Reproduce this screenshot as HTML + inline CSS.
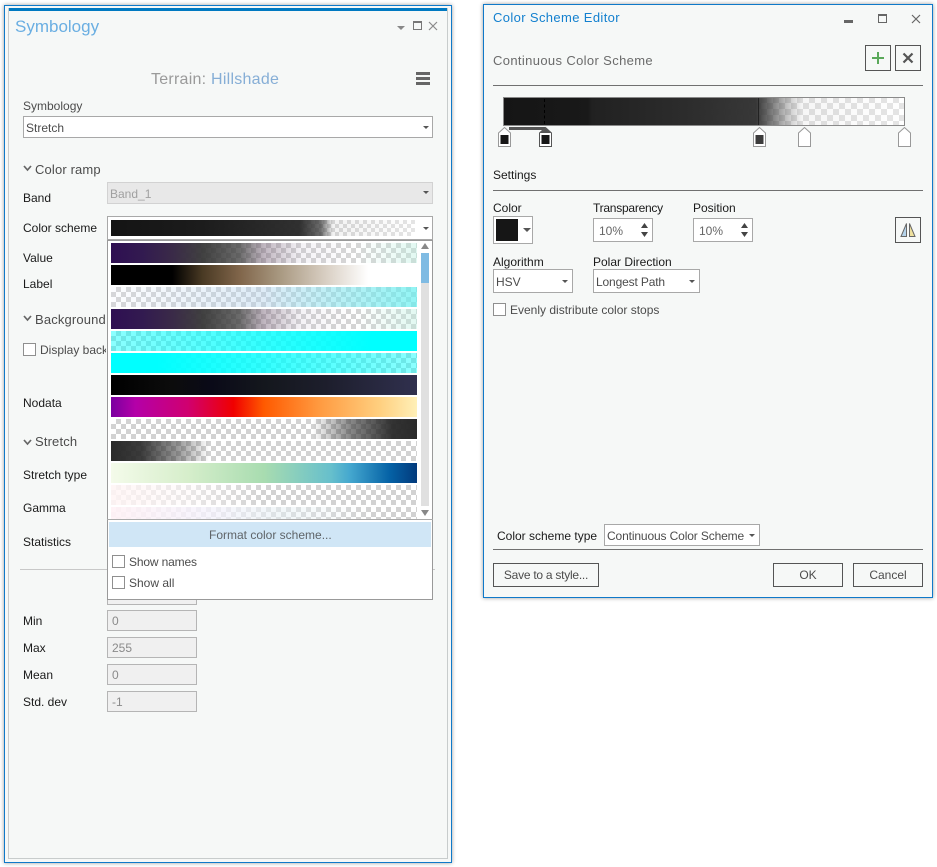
<!DOCTYPE html>
<html><head><meta charset="utf-8"><style>
html,body{margin:0;padding:0;background:#fff}
body{width:937px;height:867px;position:relative;overflow:hidden;font-family:"Liberation Sans",sans-serif;font-size:12px;color:#4c4c4c}
div,span,svg{position:absolute;box-sizing:border-box}
.t{white-space:nowrap;line-height:16px;height:16px}
.k{color:#1a1a1a}
.h{color:#4c4c4c;font-size:13px;letter-spacing:.15px}
.box{border:1px solid #a8a8a8;background:#fff}
.ro{border:1px solid #b5b5b5;background:#f0f0f0;color:#8a8a8a;padding:3px 4px;line-height:14px;font-size:12px;left:107px;width:90px;height:21px}
.ar{width:0;height:0;border-left:3px solid transparent;border-right:3px solid transparent;border-top:3px solid #555}
.cb{width:13px;height:13px;border:1px solid #8f8f8f;background:#fff}
.r{left:111px;width:306px;height:20px}
.chev{width:9px;height:7px}
.btn{border:1px solid #555;background:#f6f8f7;text-align:center;color:#4c4c4c}
.ck{background-color:#fff;background-image:conic-gradient(#d2d2d2 25%,#fff 0 50%,#d2d2d2 0 75%,#fff 0);background-size:10px 10px}
.ck2{background-color:#fff;background-image:conic-gradient(#dcdcdc 25%,#fff 0 50%,#dcdcdc 0 75%,#fff 0);background-size:8px 8px}
</style></head><body>

<!-- LEFT PANEL -->
<div style="left:4px;top:5px;width:448px;height:858px;background:#f6f8f7;border:1px solid #0f79c9;box-shadow:0 0 4px rgba(0,0,0,.4)"></div>
<div style="left:8px;top:8px;width:440px;height:851px;border:1px solid #c8cccc;border-top:none"></div>
<div style="left:9px;top:8px;width:438px;height:3px;background:#0079c1"></div>

<div class="t" style="left:15px;top:17px;font-size:17px;line-height:20px;height:20px;color:#6aaee2">Symbology</div>
<div class="ar" style="left:397px;top:26px;border-left-width:4px;border-right-width:4px;border-top-width:4px;border-top-color:#888"></div>
<div style="left:413px;top:21px;width:9px;height:9px;border:1px solid #777;border-top-width:2px"></div>
<svg style="left:428px;top:21px" width="10" height="10"><path d="M1 1L9 9M9 1L1 9" stroke="#8a8a8a" stroke-width="1.2"/></svg>

<div class="t" style="left:151px;top:70px;font-size:16px;letter-spacing:.25px;line-height:20px;height:20px;color:#9a9a9a">Terrain: <span style="position:static;color:#86aed6">Hillshade</span></div>
<div style="left:416px;top:72px;width:14px;height:3px;background:#666"></div>
<div style="left:416px;top:77px;width:14px;height:3px;background:#666"></div>
<div style="left:416px;top:82px;width:14px;height:3px;background:#666"></div>

<div class="t" style="left:23px;top:98px">Symbology</div>
<div class="box" style="left:23px;top:116px;width:410px;height:22px"></div>
<div class="t" style="left:26px;top:120px">Stretch</div>
<div class="ar" style="left:423px;top:126px"></div>

<svg class="chev" style="left:23px;top:165px" width="9" height="7"><path d="M1 1L4.500 5 8 1" fill="none" stroke="#666" stroke-width="1.700"/></svg>
<div class="t h" style="left:35px;top:162px">Color ramp</div>

<div class="t k" style="left:23px;top:190px">Band</div>
<div style="left:107px;top:182px;width:326px;height:22px;background:#e8e8e8;border:1px solid #d2d2d2"></div>
<div class="t" style="left:110px;top:186px;color:#a0a0a0">Band_1</div>
<div class="ar" style="left:423px;top:191px"></div>

<div class="t k" style="left:23px;top:220px">Color scheme</div>
<div class="box" style="left:107px;top:216px;width:326px;height:24px"></div>
<div class="ck2" style="left:111px;top:220px;width:304px;height:16px"></div>
<div style="left:111px;top:220px;width:304px;height:16px;background:linear-gradient(90deg,#141414 0,#1c1c1c 30%,rgba(42,42,42,.97) 62%,rgba(60,60,60,.75) 69%,rgba(150,150,150,.12) 73%,rgba(255,255,255,.25) 100%)"></div>
<div class="ar" style="left:423px;top:227px"></div>

<div class="t k" style="left:23px;top:250px">Value</div>
<div class="t k" style="left:23px;top:276px">Label</div>

<svg class="chev" style="left:23px;top:315px" width="9" height="7"><path d="M1 1L4.500 5 8 1" fill="none" stroke="#666" stroke-width="1.700"/></svg>
<div class="t h" style="left:35px;top:312px">Background</div>
<div class="cb" style="left:23px;top:343px"></div>
<div class="t" style="left:40px;top:342px;width:66px;overflow:hidden">Display background</div>

<div class="t k" style="left:23px;top:395px">Nodata</div>

<svg class="chev" style="left:23px;top:439px" width="9" height="7"><path d="M1 1L4.500 5 8 1" fill="none" stroke="#666" stroke-width="1.700"/></svg>
<div class="t h" style="left:35px;top:434px">Stretch</div>

<div class="t k" style="left:23px;top:467px">Stretch type</div>
<div class="t k" style="left:23px;top:500px">Gamma</div>
<div class="t k" style="left:23px;top:534px">Statistics</div>
<div style="left:20px;top:569px;width:415px;height:1px;background:#c8c8c8"></div>

<div style="left:107px;top:590px;width:90px;height:15px;border:1px solid #b5b5b5;background:#f0f0f0"></div>
<div class="t k" style="left:23px;top:613px">Min</div>
<div class="ro" style="top:610px">0</div>
<div class="t k" style="left:23px;top:640px">Max</div>
<div class="ro" style="top:637px">255</div>
<div class="t k" style="left:23px;top:667px">Mean</div>
<div class="ro" style="top:664px">0</div>
<div class="t k" style="left:23px;top:694px">Std. dev</div>
<div class="ro" style="top:691px">-1</div>

<!-- DROPDOWN -->
<div style="left:107px;top:240px;width:326px;height:360px;background:#fff;border:1px solid #999"></div>
<div style="left:107px;top:519px;width:326px;height:1px;background:#aaa"></div>

<div class="r ck" style="top:243px"></div>
<div class="r" style="top:243px;background:linear-gradient(90deg,#2f0f52 0,#321a50 10%,#3a2a48 20%,rgba(55,55,55,.95) 30%,rgba(70,70,70,.8) 42%,rgba(130,110,130,.5) 50%,rgba(200,190,210,.2) 62%,rgba(255,255,255,.1) 80%,rgba(190,240,225,.45) 100%)"></div>
<div class="r" style="top:265px;background:linear-gradient(90deg,#000 0,#000 20%,#4a3a24 30%,#80654a 42%,#a89880 55%,#d8cec2 70%,#fff 84%,#fff 100%)"></div>
<div class="r ck" style="top:287px"></div>
<div class="r" style="top:287px;background:linear-gradient(90deg,rgba(240,240,255,.15) 0,rgba(180,210,235,.45) 50%,rgba(100,240,240,.7) 100%)"></div>
<div class="r ck" style="top:309px"></div>
<div class="r" style="top:309px;background:linear-gradient(90deg,#2f0f52 0,#321a50 10%,#3a2a48 20%,rgba(55,55,55,.95) 30%,rgba(70,70,70,.8) 42%,rgba(130,110,130,.5) 50%,rgba(200,190,210,.2) 62%,rgba(255,255,255,.05) 80%,rgba(190,240,225,.45) 100%)"></div>
<div class="r ck" style="top:331px"></div>
<div class="r" style="top:331px;background:linear-gradient(90deg,rgba(0,255,255,.45) 0,rgba(0,255,255,.8) 50%,#0ff 85%)"></div>
<div class="r ck" style="top:353px"></div>
<div class="r" style="top:353px;background:linear-gradient(90deg,#0ff 15%,rgba(0,255,255,.8) 50%,rgba(0,255,255,.45) 100%)"></div>
<div class="r" style="top:375px;background:linear-gradient(90deg,#000 0,#0c0c0c 20%,#0a0a18 33%,#14171d 50%,#1d1e2c 70%,#30304e 100%)"></div>
<div class="r" style="top:397px;background:linear-gradient(90deg,#7a00a0 0,#b400a8 8%,#d00070 25%,#f00000 40%,#ff5a00 50%,#ff9a40 68%,#ffd080 88%,#fff0b8 100%)"></div>
<div class="r ck" style="top:419px"></div>
<div class="r" style="top:419px;background:linear-gradient(90deg,rgba(40,40,40,0) 66%,rgba(60,60,60,.6) 78%,rgba(40,40,40,.95) 92%,#2a2a2a 100%)"></div>
<div class="r ck" style="top:441px"></div>
<div class="r" style="top:441px;background:linear-gradient(90deg,#2a2a2a 0,rgba(40,40,40,.9) 10%,rgba(70,70,70,.55) 22%,rgba(100,100,100,0) 32%)"></div>
<div class="r" style="top:463px;background:linear-gradient(90deg,#f4fbea 0,#d6eecb 25%,#a8dcb0 50%,#66bfcc 72%,#45a8cf 78%,#0562a6 91%,#023a7c 100%)"></div>
<div class="r ck" style="top:485px"></div>
<div class="r" style="top:485px;background:linear-gradient(90deg,rgba(255,245,245,.9) 0,rgba(255,250,250,.55) 25%,rgba(255,255,255,0) 50%)"></div>
<div class="r ck" style="top:507px;height:12px"></div>
<div class="r" style="top:507px;height:12px;background:linear-gradient(90deg,rgba(255,242,246,.95) 0,rgba(245,242,252,.8) 30%,rgba(230,240,244,.55) 55%,rgba(255,255,255,0) 85%)"></div>

<div style="left:421px;top:253px;width:8px;height:253px;background:#e0e0e0"></div>
<div style="left:421px;top:253px;width:8px;height:30px;background:#7fbbe3"></div>
<svg style="left:421px;top:243px" width="8" height="6"><path d="M0 6L4 0 8 6Z" fill="#888"/></svg>
<svg style="left:421px;top:510px" width="8" height="6"><path d="M0 0H8L4 6Z" fill="#888"/></svg>

<div style="left:109px;top:522px;width:322px;height:25px;background:#d0e6f6"></div>
<div class="t" style="left:209px;top:527px;color:#5f6468">Format color scheme...</div>
<div class="cb" style="left:112px;top:555px"></div>
<div class="t" style="left:129px;top:554px;letter-spacing:-.15px">Show names</div>
<div class="cb" style="left:112px;top:576px"></div>
<div class="t" style="left:129px;top:575px">Show all</div>

<!-- RIGHT DIALOG -->
<div style="left:483px;top:4px;width:450px;height:594px;background:#f6f8f7;border:1px solid #0f79c9;box-shadow:0 0 4px rgba(0,0,0,.4)"></div>

<div class="t" style="left:493px;top:10px;font-size:13px;letter-spacing:.37px;color:#1380cf">Color Scheme Editor</div>
<div style="left:844px;top:20px;width:9px;height:3px;background:#666"></div>
<div style="left:878px;top:14px;width:9px;height:9px;border:1px solid #666;border-top-width:2px"></div>
<svg style="left:911px;top:14px" width="10" height="10"><path d="M1 1L9 9M9 1L1 9" stroke="#666" stroke-width="1.2"/></svg>

<div class="t" style="left:493px;top:53px;font-size:13px;letter-spacing:.36px;color:#6b6b6b">Continuous Color Scheme</div>
<div class="btn" style="left:865px;top:45px;width:26px;height:26px"></div>
<svg style="left:871px;top:51px" width="14" height="14"><path d="M7 1V13M1 7H13" stroke="#5aa95a" stroke-width="2"/></svg>
<div class="btn" style="left:895px;top:45px;width:26px;height:26px"></div>
<svg style="left:902px;top:52px" width="12" height="12"><path d="M1.500 1.500L10.500 10.500M10.500 1.500L1.500 10.500" stroke="#555" stroke-width="2.200"/></svg>
<div style="left:493px;top:85px;width:430px;height:1px;background:#707070"></div>

<div class="ck2" style="left:503px;top:97px;width:402px;height:29px;background-size:12px 12px"></div>
<div style="left:503px;top:97px;width:402px;height:29px;border:1px solid #8a8a8a;background:linear-gradient(90deg,#151515 0,#191919 21%,#212121 22%,#2c2c2c 45%,rgba(52,52,52,.98) 63%,rgba(70,70,70,.8) 66%,rgba(130,130,130,.45) 71%,rgba(220,220,220,.25) 74.500%,rgba(255,255,255,.25) 100%)"></div>
<div style="left:544px;top:99px;width:0;height:25px;border-left:1px dashed #000"></div>
<div style="left:758px;top:98px;width:1px;height:27px;background:#222"></div>

<div style="left:509px;top:127px;width:36px;height:3px;background:#555"></div>
<svg style="left:497px;top:126px" width="15" height="22"><path d="M1.500 20.500V7L7.500 1.500 13.500 7V20.500Z" fill="#fff" stroke="#999"/><rect x="3.500" y="9" width="8" height="9" fill="#161616"/></svg>
<svg style="left:538px;top:126px" width="15" height="22"><path d="M1.500 20.500V7L7.500 1.500 13.500 7V20.500Z" fill="#fff" stroke="#555"/><path d="M2 7L7.500 2 13 7Z" fill="#555"/><rect x="3.500" y="9" width="8" height="9" fill="#161616"/></svg>
<svg style="left:752px;top:126px" width="15" height="22"><path d="M1.500 20.500V7L7.500 1.500 13.500 7V20.500Z" fill="#fff" stroke="#999"/><rect x="3.500" y="9" width="8" height="9" fill="#3c3c3c"/></svg>
<svg style="left:797px;top:126px" width="15" height="22"><path d="M1.500 20.500V7L7.500 1.500 13.500 7V20.500Z" fill="#fff" stroke="#999"/></svg>
<svg style="left:897px;top:126px" width="15" height="22"><path d="M1.500 20.500V7L7.500 1.500 13.500 7V20.500Z" fill="#fff" stroke="#999"/></svg>

<div class="t k" style="left:493px;top:167px">Settings</div>
<div style="left:493px;top:190px;width:430px;height:1px;background:#707070"></div>

<div class="t k" style="left:493px;top:200px">Color</div>
<div class="box" style="left:493px;top:216px;width:40px;height:28px"></div>
<div style="left:496px;top:219px;width:22px;height:22px;background:#161616"></div>
<div class="ar" style="left:523px;top:228px;border-left-width:4px;border-right-width:4px;border-top-width:4px"></div>

<div class="t k" style="left:593px;top:200px;letter-spacing:-.25px">Transparency</div>
<div class="box" style="left:593px;top:218px;width:60px;height:24px"></div>
<div class="t" style="left:599px;top:223px;color:#666">10%</div>
<svg style="left:640px;top:222px" width="9" height="16"><path d="M1 6L4.500 1 8 6ZM1 10L4.500 15 8 10Z" fill="#444"/></svg>

<div class="t k" style="left:693px;top:200px">Position</div>
<div class="box" style="left:693px;top:218px;width:60px;height:24px"></div>
<div class="t" style="left:699px;top:223px;color:#666">10%</div>
<svg style="left:740px;top:222px" width="9" height="16"><path d="M1 6L4.500 1 8 6ZM1 10L4.500 15 8 10Z" fill="#444"/></svg>

<div class="btn" style="left:895px;top:217px;width:26px;height:26px"></div>
<svg style="left:899px;top:222px" width="18" height="16"><path d="M7.500 1.500L2 14.500H7.500Z" fill="#b5d3ea" stroke="#666"/><path d="M10.500 1.500L16 14.500H10.500Z" fill="#efe19e" stroke="#666"/></svg>

<div class="t k" style="left:493px;top:254px">Algorithm</div>
<div class="box" style="left:493px;top:269px;width:80px;height:24px"></div>
<div class="t" style="left:496px;top:274px">HSV</div>
<div class="ar" style="left:562px;top:280px"></div>

<div class="t k" style="left:593px;top:254px">Polar Direction</div>
<div class="box" style="left:593px;top:269px;width:107px;height:24px"></div>
<div class="t" style="left:596px;top:274px;letter-spacing:-.15px">Longest Path</div>
<div class="ar" style="left:689px;top:280px"></div>

<div class="cb" style="left:493px;top:303px"></div>
<div class="t" style="left:510px;top:302px">Evenly distribute color stops</div>

<div class="t k" style="left:497px;top:528px">Color scheme type</div>
<div class="box" style="left:604px;top:524px;width:156px;height:22px"></div>
<div class="t" style="left:607px;top:528px;letter-spacing:-.13px">Continuous Color Scheme</div>
<div class="ar" style="left:749px;top:534px"></div>
<div style="left:493px;top:549px;width:430px;height:1px;background:#707070"></div>

<div class="btn" style="left:493px;top:563px;width:106px;height:24px;line-height:22px;letter-spacing:-.25px">Save to a style...</div>
<div class="btn" style="left:773px;top:563px;width:70px;height:24px;line-height:22px">OK</div>
<div class="btn" style="left:853px;top:563px;width:70px;height:24px;line-height:22px">Cancel</div>

</body></html>
